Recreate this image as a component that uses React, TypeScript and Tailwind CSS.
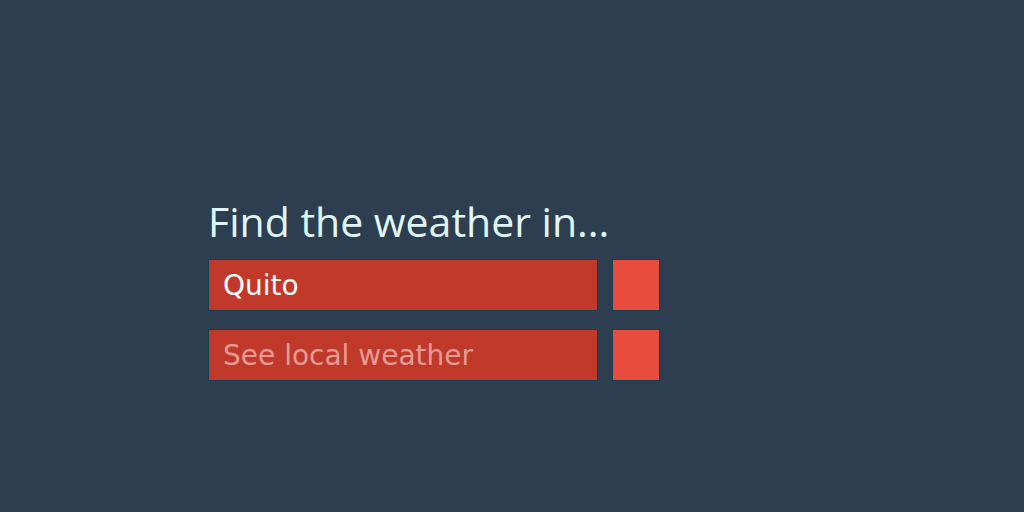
import React from "react";

const App = () => {
  return (
    <div className="w-screen h-[512px] bg-[#2c3e50] flex flex-col pl-[208px] pt-[195px]">
      <h1 className="text-[41px] leading-[52px] text-[#e0f7fa] font-['Open_Sans',sans-serif] mb-[12px]">
        Find the weather in...
      </h1>
      <div className="flex flex-col gap-[18px]">
        <div className="flex flex-row gap-[14px]">
          <input
            defaultValue="Quito"
            className="w-[390px] h-[52px] bg-[#c0392b] border border-[#173f52] px-[14px] text-[28px] text-white font-['DejaVu_Sans',sans-serif] outline-none"
          />
          <button className="w-[48px] h-[52px] bg-[#e74c3c] border border-[#173f52]"></button>
        </div>
        <div className="flex flex-row gap-[14px]">
          <input
            placeholder="See local weather"
            className="w-[390px] h-[52px] bg-[#c0392b] border border-[#173f52] px-[14px] text-[28px] text-white placeholder:text-[#e79b93] font-['DejaVu_Sans',sans-serif] outline-none"
          />
          <button className="w-[48px] h-[52px] bg-[#e74c3c] border border-[#173f52]"></button>
        </div>
      </div>
    </div>
  );
};

export default App;
